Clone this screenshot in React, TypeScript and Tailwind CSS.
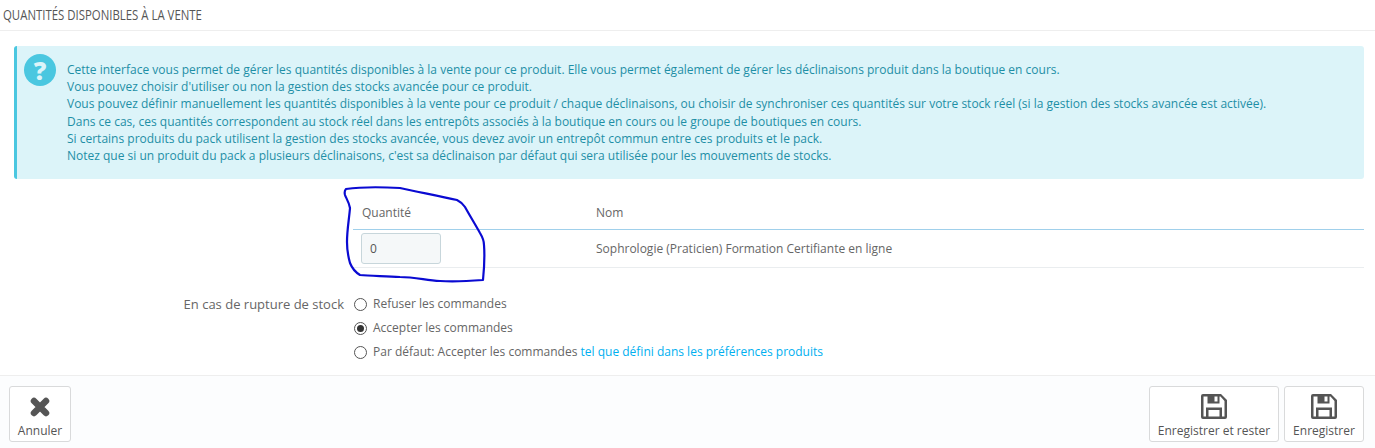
const lines = [
    "Cette interface vous permet de gérer les quantités disponibles à la vente pour ce produit. Elle vous permet également de gérer les déclinaisons produit dans la boutique en cours.",
    "Vous pouvez choisir d'utiliser ou non la gestion des stocks avancée pour ce produit.",
    "Vous pouvez définir manuellement les quantités disponibles à la vente pour ce produit / chaque déclinaisons, ou choisir de synchroniser ces quantités sur votre stock réel (si la gestion des stocks avancée est activée).",
    "Dans ce cas, ces quantités correspondent au stock réel dans les entrepôts associés à la boutique en cours ou le groupe de boutiques en cours.",
    "Si certains produits du pack utilisent la gestion des stocks avancée, vous devez avoir un entrepôt commun entre ces produits et le pack.",
    "Notez que si un produit du pack a plusieurs déclinaisons, c'est sa déclinaison par défaut qui sera utilisée pour les mouvements de stocks.",
];

function Radio({ checked }: { checked?: boolean }) {
    return (
        <span className="flex h-[13px] w-[13px] shrink-0 items-center justify-center rounded-full border border-[#555] bg-white">
            {checked && <span className="h-[7px] w-[7px] rounded-full bg-[#333]" />}
        </span>
    );
}

function SaveIcon() {
    return (
        <svg width="26" height="25" viewBox="0 0 26 25" className="text-[#555]">
            <path
                fill="currentColor"
                fillRule="evenodd"
                d="M2 0H20L26 6V23a2 2 0 0 1-2 2H2a2 2 0 0 1-2-2V2a2 2 0 0 1 2-2ZM2.500 2.500V22.500H5V13.500H21V22.500H23.500V7L19.500 2.500H18.500V9.500H6.500V2.500ZM7.500 16V22.500H18.500V16ZM13.500 2.500V7.500H16.500V2.500Z"
            />
        </svg>
    );
}

function CloseIcon() {
    return (
        <svg width="20" height="20" viewBox="0 0 20 20" className="text-[#555]">
            <path d="M4 4L16 16M16 4L4 16" stroke="currentColor" strokeWidth="6.500" strokeLinecap="round" />
        </svg>
    );
}

function FooterButton({ label, width, icon }: { label: string; width: string; icon: React.ReactNode }) {
    return (
        <button className={`flex h-[56px] ${width} flex-col items-center rounded-[3px] border border-[#d9dadb] bg-white pt-[7px] text-[12px] leading-[17px] text-[#555]`}>
            <span className="flex h-[25px] items-center justify-center">{icon}</span>
            <span className="mt-[3px]">{label}</span>
        </button>
    );
}

export default function App() {
    return (
        <div className="relative h-[448px] w-[1375px] overflow-hidden bg-white font-['Open_Sans',sans-serif] text-[12px] text-[#666]">
            <div className="h-[31px] border-b border-[#eeeeee] pl-[3px] pt-[6px]">
                <h3 className="origin-left scale-x-[0.76] whitespace-nowrap font-['Open_Sans',sans-serif] text-[15px] leading-[17px] text-[#555]">
                    QUANTITÉS DISPONIBLES À LA VENTE
                </h3>
            </div>

            <div className="ml-[14px] mr-[11px] mt-[15px] flex h-[133px] rounded-[3px] border-l-[3px] border-[#4ac7e0] bg-[#dcf4f9] text-[#1e8fa6]">
                <div className="w-[50px] shrink-0 pl-[7px] pt-[8px]">
                    <span className="flex h-[32px] w-[32px] items-center justify-center rounded-full bg-[#4ac7e0] text-[25px] font-extrabold leading-none text-[#dcf4f9]">
                        ?
                    </span>
                </div>
                <div className="pt-[15px] text-[12px] leading-[17.200px]">
                    {lines.map((line) => (
                        <p key={line} className="whitespace-nowrap">{line}</p>
                    ))}
                </div>
            </div>

            <div className="ml-[353px] mr-[11px] mt-[17px]">
                <div className="flex h-[34px] items-center border-b border-[#a0d0eb]">
                    <span className="w-[243px] pl-[9px]">Quantité</span>
                    <span>Nom</span>
                </div>
                <div className="flex h-[38px] items-center border-b border-[#eaedef]">
                    <div className="w-[243px] pl-[8px]">
                        <div className="flex h-[31px] w-[80px] items-center rounded-[3px] border border-[#c7d6db] bg-[#f5f8f9] pl-[8px] text-[#555]">
                            0
                        </div>
                    </div>
                    <span>Sophrologie (Praticien) Formation Certifiante en ligne</span>
                </div>
            </div>

            <div className="mt-[24px] flex">
                <div className="w-[344px] text-right text-[13px] leading-[24px] text-[#666]">En cas de rupture de stock</div>
                <div className="ml-[10px] flex flex-col">
                    <label className="flex h-[24px] items-center gap-[6px]">
                        <Radio />
                        Refuser les commandes
                    </label>
                    <label className="flex h-[24px] items-center gap-[6px]">
                        <Radio checked />
                        Accepter les commandes
                    </label>
                    <label className="flex h-[24px] items-center gap-[6px]">
                        <Radio />
                        <span>
                            Par défaut: Accepter les commandes <a className="text-[#00aff0]">tel que défini dans les préférences produits</a>
                        </span>
                    </label>
                </div>
            </div>

            <div className="mt-[11px] flex h-[73px] items-start justify-between border-t border-[#eeeeee] bg-[#fcfdfe] pl-[9px] pr-[11px] pt-[10px]">
                <FooterButton label="Annuler" width="w-[62px]" icon={<CloseIcon />} />
                <div className="flex gap-[5px]">
                    <FooterButton label="Enregistrer et rester" width="w-[130px]" icon={<SaveIcon />} />
                    <FooterButton label="Enregistrer" width="w-[80px]" icon={<SaveIcon />} />
                </div>
            </div>

            {/* hand drawn annotation over the quantity column */}
            <svg className="pointer-events-none absolute left-[340px] top-[180px]" width="150" height="110" viewBox="0 0 150 110" fill="none">
                <path
                    d="M6 9C20 7 42 7 60 8C78 12 100 16 117 20C121 22 123 24 125 27C130 36 135 44 140 53C143 58 144 61 144 65C145 78 144 90 143 100C130 101 115 102 100 101C85 100 75 97 60 97C45 96 30 96 20 95C15 92 12 88 10 83C8 76 7 70 7 62C7 50 9 40 10 28C9 22 6 18 5 15C4 11 5 10 6 9Z"
                    stroke="#0a0ad2"
                    strokeWidth="2.200"
                    strokeLinejoin="round"
                />
            </svg>
        </div>
    );
}
